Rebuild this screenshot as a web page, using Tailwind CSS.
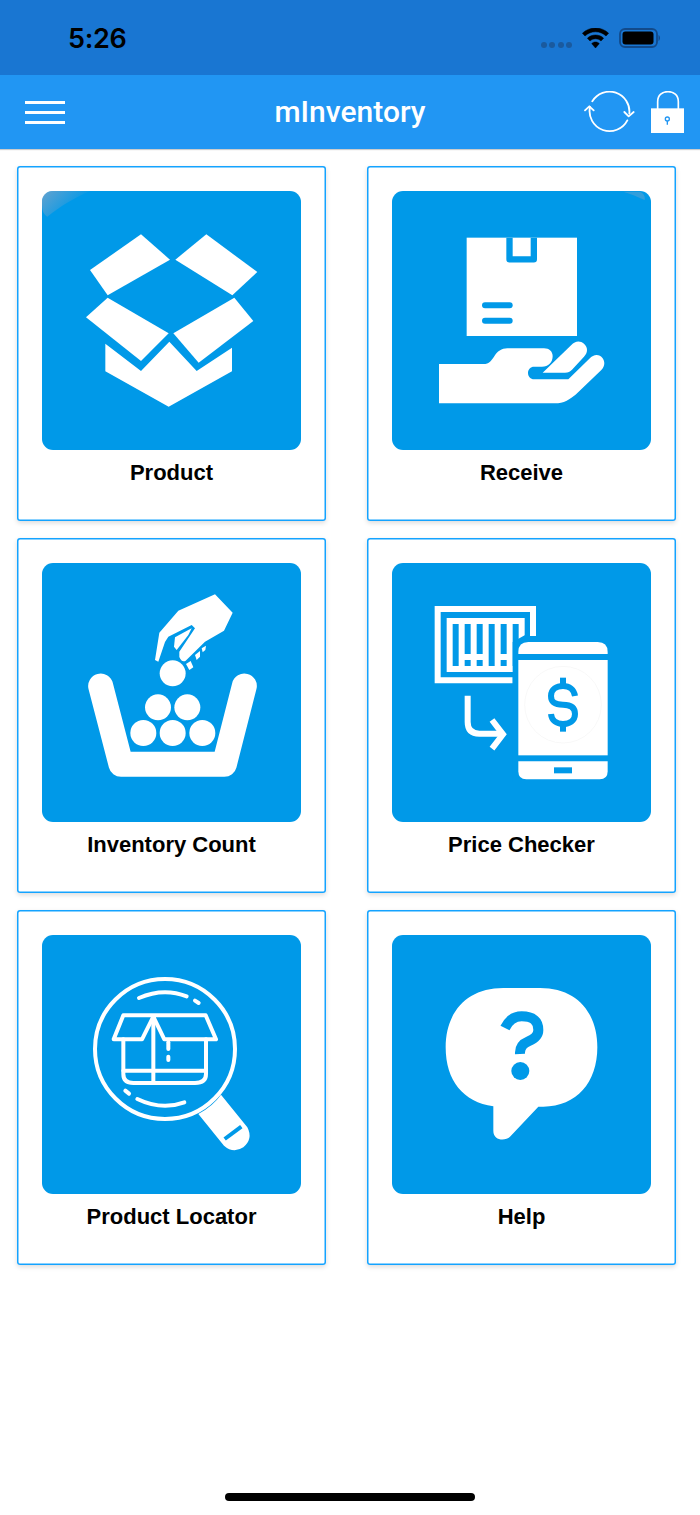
<!doctype html>
<html>
<head>
<meta charset="utf-8">
<script src="https://cdn.jsdelivr.net/npm/@tailwindcss/browser@4"></script>
</head>
<body class="bg-white">
<div class="relative w-[700px] h-[1515px] overflow-hidden bg-white font-['Liberation_Sans',Arial,sans-serif]">
  <!-- status bar -->
  <div class="h-[75px] bg-[#1976d2] flex items-center justify-between pl-[68px] pr-[40px]">
    <span class="pt-[2px] text-[27px] font-semibold text-black leading-none tracking-[-0.3px] font-['Inter',sans-serif]">5:26</span>
    <div class="flex items-end gap-[10px] h-[20px]">
      <div class="flex gap-[2.500px]">
        <span class="w-[6px] h-[6px] rounded-full bg-[#1a5a9e]"></span>
        <span class="w-[6px] h-[6px] rounded-full bg-[#1a5a9e]"></span>
        <span class="w-[6px] h-[6px] rounded-full bg-[#1a5a9e]"></span>
        <span class="w-[6px] h-[6px] rounded-full bg-[#1a5a9e]"></span>
      </div>
      <svg class="w-[27px] h-[20px]" viewBox="0 0 27 20"><g stroke="#000" stroke-width=".5"><path d="M13.5 0C8.4 0 3.8 2 .4 5.2L3 8c2.7-2.600 6.400-4.200 10.500-4.200S21.300 5.400 24 8l2.600-2.800C23.200 2 18.600 0 13.500 0z"/><path d="M13.500 7c-3.200 0-6 1.200-8.100 3.200l2.600 2.800c1.400-1.400 3.400-2.200 5.500-2.200s4.100.8 5.500 2.200l2.600-2.800C19.500 8.200 16.700 7 13.500 7z"/><path d="M13.500 14c-1.500 0-2.900.6-3.800 1.600l3.800 4.400 3.800-4.400c-.9-1-2.300-1.600-3.800-1.600z"/></g></svg>
      <svg class="w-[41px] h-[20px]" viewBox="0 0 41 20"><rect x="1" y="1" width="37" height="18" rx="5" fill="none" stroke="#124a8a" stroke-width="1.800"/><rect x="3.500" y="3.500" width="31" height="13" rx="3" fill="#000"/><path d="M39.500 7v6c.9-.4 1.500-1.600 1.500-3s-.6-2.600-1.500-3z" fill="#124a8a"/></svg>
    </div>
  </div>
  <!-- toolbar -->
  <header class="relative h-[74px] bg-[#2196f3] flex items-center justify-between pl-[25px] pr-[16px] shadow-[0_1px_1px_rgba(0,0,0,0.2)]">
    <div class="flex flex-col gap-[7px] w-[40px]">
      <span class="h-[3px] bg-white"></span>
      <span class="h-[3px] bg-white"></span>
      <span class="h-[3px] bg-white"></span>
    </div>
    <h1 class="absolute left-0 right-0 text-center text-[30px] font-medium text-white leading-none font-['Roboto',sans-serif]">mInventory</h1>
    <div class="flex items-end gap-[16px]">
      <svg class="w-[51px] h-[42px]" viewBox="27 22 153 126" fill="none" stroke="#fff" stroke-width="5.500" stroke-linecap="round" stroke-linejoin="round">
        <path d="M52 53A60 60 0 0 1 163 90"/>
        <path d="M148 85 161 98 176 85"/>
        <path d="M157 110A60 60 0 0 1 45 70"/>
        <path d="M30 80 43 68 56 80"/>
      </svg>
      <svg class="w-[33px] h-[42px]" viewBox="228 18 99 126">
        <path d="M248 72V50C248 30 262 20 279 20S310 30 310 50V72" fill="none" stroke="#fff" stroke-width="5"/>
        <rect x="228" y="70" width="99" height="74" fill="#fff"/>
        <circle cx="277" cy="102" r="6" fill="none" stroke="#2196f3" stroke-width="4"/>
        <path d="M277 108V119" stroke="#2196f3" stroke-width="4"/>
      </svg>
    </div>
  </header>
  <!-- grid -->
  <main class="grid grid-cols-[309px_309px] gap-x-[41px] gap-y-[17px] pl-[17px] pt-[17px]">
    <!-- product -->
    <a class="h-[355px] rounded-[3px] bg-white shadow-[inset_0_0_0_1.5px_#14a3ff,0_2px_5px_rgba(0,0,0,0.14)] flex flex-col items-center pt-[25px]">
      <svg class="w-[259px] h-[259px] shrink-0" viewBox="6 3 777 777">
        <defs><linearGradient id="sheenA" gradientUnits="userSpaceOnUse" x1="10" y1="8" x2="85" y2="83"><stop offset="0" stop-color="#6fa3cc" stop-opacity=".85"/><stop offset="1" stop-color="#6fa3cc" stop-opacity="0"/></linearGradient></defs>
        <rect x="6" y="3" width="777" height="777" rx="33" fill="#0099e8"/>
        <path d="M39 3H150C100 25 60 50 22 80C8 70 6 60 6 36C6 15 20 3 39 3Z" fill="url(#sheenA)"/>
        <g fill="#fff">
          <polygon points="303,133 390,209 203,316 150,240"/>
          <polygon points="499,133 652,246 577,316 406,209"/>
          <polygon points="203,323 386,430 303,513 138,382"/>
          <polygon points="583,323 640,393 476,518 400,430"/>
          <polygon points="196,461 303,543 388,455 470,543 576,473 576,544 386,650 196,544"/>
        </g>
      </svg>
      <span class="mt-[10px] text-[22px] leading-[26px] font-bold text-black">Product</span>
    </a>
    <!-- receive -->
    <a class="h-[355px] rounded-[3px] bg-white shadow-[inset_0_0_0_1.5px_#14a3ff,0_2px_5px_rgba(0,0,0,0.14)] flex flex-col items-center pt-[25px]">
      <svg class="w-[259px] h-[259px] shrink-0" viewBox="6 3 777 777">
        <rect x="6" y="3" width="777" height="777" rx="33" fill="#0099e8"/>
        <path d="M700 5H750C762 10 766 20 764 30C745 22 725 12 700 5Z" fill="#6fa3cc" opacity=".45"/>
        <g fill="#fff">
          <rect x="230" y="143" width="331" height="295"/>
          <path d="M147 522H280C298 522 305 510 312 500C322 484 335 475 352 475H462C478 475 488 485 488 498C488 518 475 530 456 530H432C422 530 414 538 414 549C414 560 422 568 432 568H535L598 506C612 492 628 492 638 505C646 516 644 530 634 540L566 605C540 630 520 640 495 640H147Z"/>
          <path d="M458 548H525C535 548 540 545 546 539L582 500C594 487 594 472 582 461C570 451 555 453 544 465Z"/>
        </g>
        <path d="M358.500 143V208H431.500V143" fill="none" stroke="#0099e8" stroke-width="19" stroke-linejoin="round"/>
        <g stroke="#0099e8" stroke-width="18" stroke-linecap="round">
          <path d="M285 346H359"/><path d="M285 392H359"/>
        </g>
      </svg>
      <span class="mt-[10px] text-[22px] leading-[26px] font-bold text-black">Receive</span>
    </a>
    <!-- inventory count -->
    <a class="h-[355px] rounded-[3px] bg-white shadow-[inset_0_0_0_1.5px_#14a3ff,0_2px_5px_rgba(0,0,0,0.14)] flex flex-col items-center pt-[25px]">
      <svg class="w-[259px] h-[259px] shrink-0" viewBox="6 3 777 777">
        <rect x="6" y="3" width="777" height="777" rx="33" fill="#0099e8"/>
        <path d="M182 372 243 607H553L613 372" fill="none" stroke="#fff" stroke-width="75" stroke-linecap="round" stroke-linejoin="round"/>
        <g fill="#fff">
          <circle cx="398" cy="334" r="39"/><circle cx="354" cy="436" r="39"/><circle cx="442" cy="436" r="39"/><circle cx="310" cy="513" r="39"/><circle cx="398" cy="513" r="39"/><circle cx="487" cy="513" r="39"/>
          <path d="M525 97 578 152 552 206 495 239 437 296Q425 302 418 285V269L465 199 455 189 385 224 375 240 355 299 345 294 358 212 415 146Z"/>
          <path d="M405 226 445 204 455 199 445 219 410 264 402 254Z"/>
          <path d="M438 306 452 297 460 316 448 324Z"/><path d="M465 279 480 267 480 284 470 294Z"/><path d="M485 259 498 251 496 264 488 271Z"/>
        </g>
      </svg>
      <span class="mt-[10px] text-[22px] leading-[26px] font-bold text-black">Inventory Count</span>
    </a>
    <!-- price checker -->
    <a class="h-[355px] rounded-[3px] bg-white shadow-[inset_0_0_0_1.5px_#14a3ff,0_2px_5px_rgba(0,0,0,0.14)] flex flex-col items-center pt-[25px]">
      <svg class="w-[259px] h-[259px] shrink-0" viewBox="6 3 777 777">
        <rect x="6" y="3" width="777" height="777" rx="33" fill="#0099e8"/>
        <g fill="#fff">
          <path d="M134 132H438V222H420V150H152V346H368V364H134Z"/>
          <rect x="170" y="168" width="234" height="162"/>
        </g>
        <g fill="#0099e8">
          <rect x="188" y="186" width="18" height="126"/>
          <rect x="224" y="186" width="18" height="90"/><rect x="224" y="294" width="18" height="18"/>
          <rect x="260" y="186" width="18" height="90"/><rect x="260" y="294" width="18" height="18"/>
          <rect x="296" y="186" width="18" height="126"/>
          <rect x="332" y="186" width="18" height="90"/><rect x="332" y="294" width="18" height="18"/>
          <rect x="368" y="186" width="18" height="126"/>
          <path d="M368 240 404 220 420 222V240H660V660H368Z"/>
        </g>
        <g fill="#fff">
          <path d="M385 276V270Q385 240 415 240H623Q653 240 653 270V276Z"/>
          <rect x="385" y="294" width="268" height="286"/>
          <path d="M385 598H653V628Q653 652 629 652H409Q385 652 385 628Z"/>
        </g>
        <rect x="492" y="616" width="54" height="18" fill="#0099e8"/>
        <circle cx="519" cy="428" r="115" fill="none" stroke="#f0f0f0" stroke-width="1.500"/>
        <g fill="none" stroke="#0099e8" stroke-width="18">
          <path d="M555 402C552 382 538 372 519 372S483 382 483 402 497 428 519 428 555 436 555 456 538 486 519 486 485 476 483 456"/>
          <path d="M519 347V372"/><path d="M519 486V509"/>
        </g>
        <g fill="none" stroke="#fff" stroke-width="18">
          <path d="M233 401V480Q233 515 268 515H338"/>
          <path d="M306 474 339 517 306 560"/>
        </g>
      </svg>
      <span class="mt-[10px] text-[22px] leading-[26px] font-bold text-black">Price Checker</span>
    </a>
    <!-- product locator -->
    <a class="h-[355px] rounded-[3px] bg-white shadow-[inset_0_0_0_1.5px_#14a3ff,0_2px_5px_rgba(0,0,0,0.14)] flex flex-col items-center pt-[25px]">
      <svg class="w-[259px] h-[259px] shrink-0" viewBox="6 3 777 777">
        <rect x="6" y="3" width="777" height="777" rx="33" fill="#0099e8"/>
        <path d="M475 540Q520 515 543 482L622 580Q640 615 610 640 580 660 552 635Z" fill="#fff"/>
        <path d="M554 615 604 578" stroke="#0099e8" stroke-width="12"/>
        <g fill="none" stroke="#fff" stroke-width="12" stroke-linecap="round" stroke-linejoin="round">
          <circle cx="375" cy="345" r="210"/>
          <path d="M297 192Q370 160 440 187"/>
          <path d="M465 200 476 207"/>
          <path d="M292 495Q365 530 433 505"/>
          <path d="M256 470 267 479"/>
          <path d="M250 244H497L528 316H373L340 248 306 316H221Z"/>
          <path d="M340 248V447"/>
          <path d="M250 316V420Q250 447 280 447H465Q498 447 498 420V316"/>
          <path d="M250 410H498"/>
          <path d="M385 325V345"/><path d="M385 368V378"/>
        </g>
      </svg>
      <span class="mt-[10px] text-[22px] leading-[26px] font-bold text-black">Product Locator</span>
    </a>
    <!-- help -->
    <a class="h-[355px] rounded-[3px] bg-white shadow-[inset_0_0_0_1.5px_#14a3ff,0_2px_5px_rgba(0,0,0,0.14)] flex flex-col items-center pt-[25px]">
      <svg class="w-[259px] h-[259px] shrink-0" viewBox="6 3 777 777">
        <rect x="6" y="3" width="777" height="777" rx="33" fill="#0099e8"/>
        <path d="M340 162H450C560 162 622 235 622 340 622 445 560 518 460 518H445L360 608C345 622 310 620 310 590V517C220 505 167 440 167 340 167 235 230 162 340 162Z" fill="#fff"/>
        <path d="M345 282Q362 247 395 247 445 247 445 288 445 310 415 322 388 333 390 360" fill="none" stroke="#0099e8" stroke-width="30"/>
        <circle cx="391" cy="411" r="27" fill="#0099e8"/>
      </svg>
      <span class="mt-[10px] text-[22px] leading-[26px] font-bold text-black">Help</span>
    </a>
  </main>
  <!-- home indicator -->
  <div class="absolute left-[225px] top-[1493px] w-[250px] h-[8px] rounded-full bg-black"></div>
</div>
</body>
</html>
